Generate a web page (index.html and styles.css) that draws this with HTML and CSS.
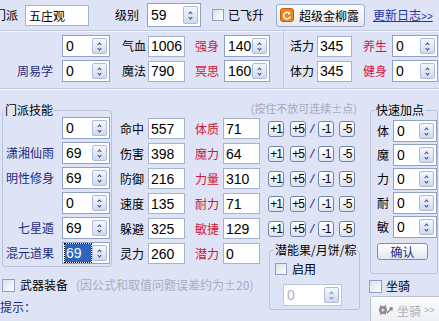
FILE: index.html
```html
<!DOCTYPE html>
<html lang="zh-CN">
<head>
    <meta charset="UTF-8">
    <title>门派加点</title>
    <link rel="stylesheet" href="styles.css">
</head>
<body>
    <div class="top">
        <span class="cut">门派</span>
        <input class="field school" value="五庄观" readonly>
        <span class="lvl-lbl">级别</span>
        <div class="combo lvl"><span class="val">59</span><span class="spin"></span></div>
        <span class="chk flying"><span class="box"></span>已飞升</span>
        <button class="super">
            <svg width="14" height="14" viewBox="0 0 14 14"><rect x="0.5" y="0.5" width="13" height="13" rx="2.5" fill="#f0851a" stroke="#c65a0a"/><path d="M9.6 5.6 A3.3 3.3 0 1 0 10.2 8.4" fill="none" stroke="#fff" stroke-width="1.6"/><path d="M7.9 3.4 L11 5.3 L8.1 7 Z" fill="#fff"/></svg>
            超级金柳露
        </button>
        <a class="log" href="#">更新日志<small>&gt;&gt;</small></a>
    </div>

    <div class="attrs">
        <div class="attrs-l">
            <span></span>
            <div class="combo c48"><span class="val">0</span><span class="spin"></span></div>
            <span class="lbl">气血</span>
            <input class="field w37" value="1006" readonly>
            <span class="red">强身</span>
            <div class="combo c46"><span class="val">140</span><span class="spin"></span></div>

            <span class="navy right">周易学</span>
            <div class="combo c48"><span class="val">0</span><span class="spin"></span></div>
            <span class="lbl">魔法</span>
            <input class="field w37" value="790" readonly>
            <span class="red">冥思</span>
            <div class="combo c46"><span class="val">160</span><span class="spin"></span></div>
        </div>
        <div class="attrs-r">
            <span class="lbl pad">活力</span>
            <input class="field w35" value="345" readonly>
            <span class="red">养生</span>
            <div class="combo c46"><span class="val">0</span><span class="spin"></span></div>

            <span class="lbl pad">体力</span>
            <input class="field w35" value="345" readonly>
            <span class="red">健身</span>
            <div class="combo c46"><span class="val">0</span><span class="spin"></span></div>
        </div>
    </div>

    <div class="lower">
        <div class="panel">
            <fieldset class="group skills">
                <legend>门派技能</legend>
                <div class="skill-list">
                    <span></span>
                    <div class="combo"><span class="val">0</span><span class="spin"></span></div>
                    <span class="navy right">潇湘仙雨</span>
                    <div class="combo"><span class="val">69</span><span class="spin"></span></div>
                    <span class="navy right">明性修身</span>
                    <div class="combo"><span class="val">69</span><span class="spin"></span></div>
                    <span></span>
                    <div class="combo"><span class="val">0</span><span class="spin"></span></div>
                    <span class="navy right">七星遁</span>
                    <div class="combo"><span class="val">69</span><span class="spin"></span></div>
                    <span class="navy right">混元道果</span>
                    <div class="combo"><span class="val"><span class="sel">69</span></span><span class="spin"></span></div>
                </div>
            </fieldset>

            <span class="hint">(按住不放可连续±点)</span>

            <span class="stat-lbl">命中</span>
            <input class="field w37" value="557" readonly>
            <span class="red">体质</span>
            <input class="field w37" value="71" readonly>
            <div class="pm"><span class="b">+1</span><span class="b g6">+5</span><span class="slash">/</span><span class="b">-1</span><span class="b g5">-5</span></div>

            <span class="stat-lbl">伤害</span>
            <input class="field w37" value="398" readonly>
            <span class="red">魔力</span>
            <input class="field w37" value="64" readonly>
            <div class="pm"><span class="b">+1</span><span class="b g6">+5</span><span class="slash">/</span><span class="b">-1</span><span class="b g5">-5</span></div>

            <span class="stat-lbl">防御</span>
            <input class="field w37" value="216" readonly>
            <span class="red">力量</span>
            <input class="field w37" value="310" readonly>
            <div class="pm"><span class="b">+1</span><span class="b g6">+5</span><span class="slash">/</span><span class="b">-1</span><span class="b g5">-5</span></div>

            <span class="stat-lbl">速度</span>
            <input class="field w37" value="135" readonly>
            <span class="red">耐力</span>
            <input class="field w37" value="71" readonly>
            <div class="pm"><span class="b">+1</span><span class="b g6">+5</span><span class="slash">/</span><span class="b">-1</span><span class="b g5">-5</span></div>

            <span class="stat-lbl">躲避</span>
            <input class="field w37" value="325" readonly>
            <span class="red">敏捷</span>
            <input class="field w37" value="129" readonly>
            <div class="pm"><span class="b">+1</span><span class="b g6">+5</span><span class="slash">/</span><span class="b">-1</span><span class="b g5">-5</span></div>

            <span class="stat-lbl">灵力</span>
            <input class="field w37" value="260" readonly>
            <span class="red">潜力</span>
            <input class="field w37" value="0" readonly>

            <fieldset class="group fruit">
                <legend>潜能果/月饼/粽</legend>
                <span class="chk use"><span class="box"></span>启用</span>
                <div class="combo off"><span class="val">0</span><span class="spin"></span></div>
            </fieldset>

            <div class="weapon">
                <span class="chk"><span class="box"></span>武器装备</span>
                <span class="note">(因公式和取值问题误差约为±20)</span>
            </div>
            <div class="tip">提示：</div>
        </div>

        <div class="side">
            <fieldset class="group quick">
                <legend>快速加点</legend>
                <div class="quick-list">
                    <span class="q">体</span>
                    <div class="combo"><span class="val">0</span><span class="spin"></span></div>
                    <span class="q">魔</span>
                    <div class="combo"><span class="val">0</span><span class="spin"></span></div>
                    <span class="q">力</span>
                    <div class="combo"><span class="val">0</span><span class="spin"></span></div>
                    <span class="q">耐</span>
                    <div class="combo"><span class="val">0</span><span class="spin"></span></div>
                    <span class="q">敏</span>
                    <div class="combo"><span class="val">0</span><span class="spin"></span></div>
                </div>
                <button class="ok">确认</button>
            </fieldset>
            <span class="chk ride"><span class="box"></span>坐骑</span>
            <button class="ride-btn">
                <svg width="16" height="14" viewBox="0 0 16 14"><circle cx="5" cy="7" r="4" fill="#8c8c8c"/><circle cx="5" cy="7" r="1.6" fill="#d6d6d6"/><path d="M2 2.5 L4 4 M8 2.5 L6 4 M2 11.5 L4 10 M8 11.5 L6 10" stroke="#8c8c8c" stroke-width="1.4"/><path d="M9 10 L14 5 M11.5 5 L14 5 L14 7.5" fill="none" stroke="#7a7a7a" stroke-width="1.3"/></svg>
                坐骑<small>&gt;&gt;</small>
            </button>
        </div>
    </div>
</body>
</html>
```

FILE: styles.css
```css
body {
    margin: 0;
    width: 439px;
    height: 321px;
    overflow: hidden;
    background: #dee4f5;
    font-family: "Noto Sans CJK SC", "DejaVu Sans", sans-serif;
    font-size: 12px;
    line-height: 14px;
    color: #000;
}

/* shared controls */
.field {
    box-sizing: border-box;
    height: 21px;
    margin: 0;
    padding: 0 2px;
    border: 1px solid #a4b3cf;
    background: #fff;
    font: 14px "Liberation Sans", sans-serif;
    color: #000;
    outline: none;
}
.w37 { width: 37px; }
.w35 { width: 35px; }

.combo {
    box-sizing: border-box;
    display: flex;
    height: 22px;
    border: 1px solid #8fa2c6;
    background: #fff;
}
.combo .val {
    flex: 1;
    padding: 1px 0 0 3px;
    font: 14px/18px "Liberation Sans", sans-serif;
}
.spin {
    box-sizing: border-box;
    width: 15px;
    margin: 2px 2px 2px 0;
    border: 1px solid #acbbdc;
    border-radius: 2px;
    background: linear-gradient(#f5f8fd, #cfd9ef);
    display: flex;
    flex-direction: column;
    align-items: center;
    justify-content: center;
    gap: 1px;
}
.spin::before,
.spin::after {
    content: "";
    width: 2px;
    height: 2px;
    border-left: 1.5px solid #34446e;
    border-top: 1.5px solid #34446e;
    transform: rotate(45deg);
}
.spin::after {
    transform: rotate(225deg);
}
.sel {
    display: inline-block;
    width: 25px;
    margin-left: -1px;
    padding-left: 1px;
    background: #2f63c0;
    color: #fff;
    outline: 1px dotted #000;
}
.combo.off {
    border-color: #bcc5d8;
}
.combo.off .val {
    color: #a9b0bf;
}
.combo.off .spin::before,
.combo.off .spin::after {
    border-color: #7d89a8;
}

.chk {
    display: flex;
    align-items: center;
    gap: 5px;
}
.chk .box {
    box-sizing: border-box;
    width: 13px;
    height: 13px;
    border: 1px solid #8d9fc4;
    background: linear-gradient(135deg, #dcdfe8, #fff);
}

.lbl { line-height: 22px; }
.red { color: #d2153a; line-height: 22px; }
.navy { color: #1e2c7e; }
.right { text-align: right; padding-right: 9px; line-height: 22px; }

.group {
    margin: 0;
    padding: 0;
    border: 1px solid #b7c2dd;
    border-radius: 3px;
}
.group legend {
    margin-left: 4px;
    padding: 0 1px;
    line-height: 14px;
}

/* top row */
.top {
    display: flex;
    align-items: center;
    height: 30px;
    border-bottom: 1px solid #c2cbe3;
    box-shadow: 0 1px 0 #f4f6fc;
}
.cut {
    margin-left: -6px;
}
.school {
    width: 64px;
    margin-left: 7px;
    padding-left: 3px;
    font: 12px "Noto Sans CJK SC", sans-serif;
}
.lvl-lbl {
    margin-left: 26px;
}
.lvl {
    width: 54px;
    height: 24px;
    margin-left: 8px;
}
.lvl .val {
    line-height: 20px;
}
.flying {
    margin-left: 11px;
    gap: 4px;
}
.flying .box {
    width: 12px;
    height: 12px;
}
.super {
    display: flex;
    align-items: center;
    gap: 5px;
    width: 89px;
    height: 23px;
    margin-left: 12px;
    padding: 0 0 0 3px;
    border: 1px solid #98a8c8;
    border-radius: 3px;
    background: linear-gradient(#fdfdfe, #e6e9f1);
    font: 12px "Noto Sans CJK SC", sans-serif;
    color: #000;
}
.log {
    margin-left: 8px;
    color: #1d35aa;
    text-decoration: underline;
    white-space: nowrap;
}
.log small {
    font: 10px "Liberation Sans", sans-serif;
}

/* hp / mp rows */
.attrs {
    display: flex;
    height: 57px;
    border-bottom: 1px solid #c2cbe3;
    box-shadow: 0 1px 0 #f4f6fc;
}
.attrs-l,
.attrs-r {
    display: grid;
    grid-template-rows: 22px 22px;
    row-gap: 3px;
    align-content: start;
    align-items: center;
    padding-top: 4px;
}
.attrs-l {
    width: 283px;
    grid-template-columns: 62px 60px 26px 47px 29px 59px;
    border-right: 1px solid #c2cbe3;
}
.attrs-r {
    grid-template-columns: 33px 46px 29px 47px;
}
.attrs-r .pad {
    padding-left: 6px;
}
.c48 { width: 48px; }
.c46 { width: 46px; }

/* lower panel */
.lower {
    display: flex;
}
.panel {
    width: 362px;
    display: grid;
    grid-template-columns: 113px 35px 47px 28px 45px 94px;
    grid-template-rows: 28px repeat(6, 25px) 30px 20px;
    align-items: start;
}
.skills {
    grid-column: 1;
    grid-row: 1 / 8;
    margin: 14px 1px 0 2px;
    align-self: stretch;
}
.skills legend {
    margin-left: 1px;
}
.skill-list {
    display: grid;
    grid-template-columns: 59px 48px;
    grid-auto-rows: 22px;
    row-gap: 3px;
}
.skill-list .right {
    padding-right: 8px;
}
.hint {
    grid-column: 2 / 7;
    grid-row: 1;
    justify-self: end;
    align-self: end;
    margin: 0 5px 2px 0;
    font-size: 11px;
    color: #a3aac1;
}
.panel > .field,
.panel > .red,
.panel > .stat-lbl,
.panel > .pm {
    margin-top: 1px;
}
.stat-lbl {
    padding-left: 7px;
    line-height: 21px;
}
.panel > .red {
    line-height: 21px;
}
.pm {
    display: flex;
    align-items: center;
    height: 21px;
}
.pm .b {
    box-sizing: border-box;
    width: 16px;
    height: 16px;
    border: 1px solid #7384ac;
    border-radius: 3px;
    background: linear-gradient(#fff, #dfe3ee);
    font: 12px/14px "Liberation Sans", sans-serif;
    text-align: center;
    letter-spacing: -1px;
}
.pm .g6 { margin-left: 6px; }
.pm .g5 { margin-left: 5px; }
.slash {
    width: 12px;
    text-align: center;
    color: #1e2c7e;
    font: italic 13px "Liberation Sans", sans-serif;
}

.fruit {
    grid-column: 6;
    grid-row: 7 / 10;
    align-self: stretch;
    margin: 1px 2px 7px 1px;
}
.use {
    margin: 5px 0 0 5px;
}
.use .box {
    width: 12px;
    height: 12px;
}
.fruit .combo {
    width: 59px;
    margin: 8px 0 0 13px;
}

.weapon {
    grid-column: 1 / 6;
    grid-row: 8;
    display: flex;
    align-items: center;
    margin: 11px 0 0 2px;
}
.note {
    margin-left: 8px;
    color: #a6adc2;
}
.tip {
    grid-column: 1 / 6;
    grid-row: 9;
    padding-top: 3px;
    color: #1e2c7e;
}

/* right column */
.side {
    width: 77px;
    display: flex;
    flex-direction: column;
    align-items: flex-start;
}
.quick {
    box-sizing: border-box;
    width: 68px;
    height: 171px;
    margin: 14px 0 0 8px;
}
.quick-list {
    display: grid;
    grid-template-columns: 22px 44px;
    grid-auto-rows: 22px;
    row-gap: 2px;
    padding-top: 3px;
}
.q {
    padding-left: 6px;
    line-height: 22px;
}
.ok {
    width: 51px;
    height: 17px;
    margin: 5px 0 0 6px;
    padding: 0;
    border: 1px solid #7d8db2;
    border-radius: 3px;
    background: linear-gradient(#fff, #e2e6ef);
    font: 12px/14px "Noto Sans CJK SC", sans-serif;
    color: #1e2c7e;
}
.ride {
    margin: 5px 0 0 7px;
    gap: 4px;
}
.ride-btn {
    display: flex;
    align-items: center;
    gap: 3px;
    width: 72px;
    height: 28px;
    margin: 3px 0 0 8px;
    padding: 0 0 0 7px;
    border: 1px solid #b9bfcc;
    border-radius: 3px;
    background: linear-gradient(#fbfbfc, #eceef2);
    font: 12px "Noto Sans CJK SC", sans-serif;
    color: #a9adb8;
}
.ride-btn small {
    font: 9px "Liberation Sans", sans-serif;
}
```
